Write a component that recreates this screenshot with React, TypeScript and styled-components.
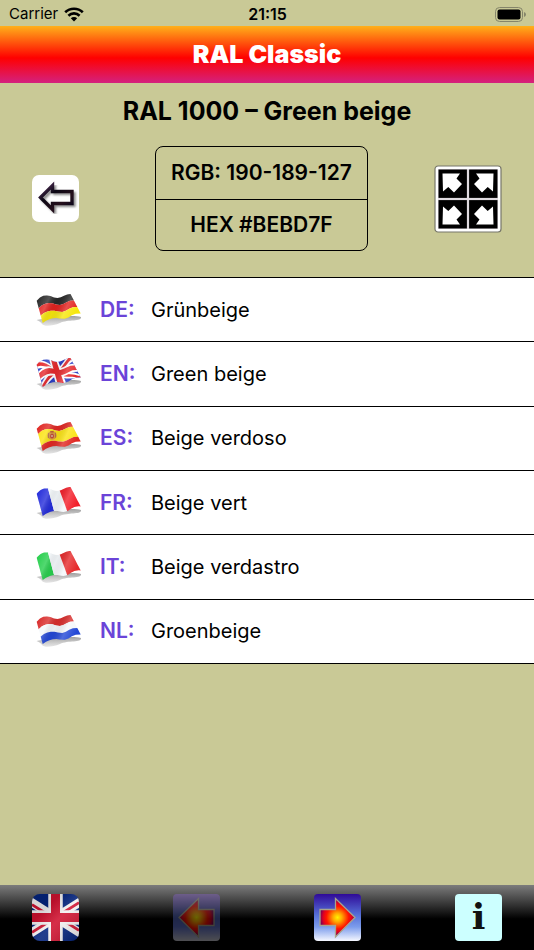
import React from "react";
import styled, { createGlobalStyle } from "styled-components";

const GlobalStyle = createGlobalStyle`
  *, *::before, *::after { box-sizing: border-box; }
  body {
    margin: 0;
    background: #c9c996;
    color: #000;
    font-family: Inter, "Liberation Sans", sans-serif;
  }
  h1, h2, p { margin: 0; }
`;

const Page = styled.div`
  min-height: 100vh;
  display: flex;
  flex-direction: column;
`;

const StatusBar = styled.div`
  display: grid;
  grid-template-columns: 1fr auto 1fr;
  align-items: center;
  height: 26px;
  padding: 2px 8px 0 9px;
  font-size: 15px;
  line-height: 24px;
`;

const Carrier = styled.span`
  display: flex;
  align-items: center;
  gap: 6px;
`;

const Clock = styled.time`
  font-size: 16px;
  font-weight: 600;
`;

const Battery = styled.svg`
  justify-self: end;
`;

const Header = styled.header`
  padding: 12px 16px;
  background: linear-gradient(#ffb01a, #ff0000 56%, #d4217f);
  color: #fff;
  text-align: center;
`;

const Title = styled.h1`
  font-size: 25px;
  line-height: 33px;
  font-weight: 900;
`;

const ColorName = styled.h2`
  padding: 12px 16px;
  font-size: 25px;
  line-height: 32px;
  font-weight: 700;
  text-align: center;
`;

const Summary = styled.section`
  display: flex;
  align-items: center;
  justify-content: space-between;
  padding: 7px 32px 26px;
`;

const IconButton = styled.button<{ $faded?: boolean; $trailing?: number }>`
  display: block;
  padding: 0;
  margin-right: ${(p) => p.$trailing ?? 0}px;
  border: 0;
  background: none;
  cursor: pointer;
  opacity: ${(p) => (p.$faded ? 0.4 : 1)};

  svg { display: block; }
`;

const Values = styled.div`
  border: 1px solid #000;
  border-radius: 8px;
  font-size: 21px;
  line-height: 28px;
  font-weight: 600;
  text-align: center;
`;

const Value = styled.p`
  padding: 12px 15px;

  & + & { padding: 11px 15px; border-top: 1px solid #000; }
`;

const Names = styled.table`
  width: 100%;
  height: 387px;
  border-collapse: collapse;
  background: #fff;
  font-size: 20px;
  line-height: 28px;
  text-align: left;
`;

const NameRow = styled.tr`
  border-top: 1px solid #000;
  border-bottom: 1px solid #000;
`;

const FlagCell = styled.td`
  width: 100px;
  padding: 0 0 0 36px;

  svg { display: block; }
`;

const Code = styled.th`
  width: 51px;
  padding: 0;
  color: #6b44d8;
  font-size: 21px;
  font-weight: 600;
`;

const Name = styled.td`
  padding: 0;
`;

const Toolbar = styled.nav`
  display: flex;
  justify-content: space-between;
  margin-top: auto;
  padding: 9px 32px;
  background: linear-gradient(#7c7c7c, #000 52%);
`;

/* ---- Waving flags: flat shapes mapped on a curved sheet ---- */

type Pt = [number, number];

const cubic = (a: Pt, b: Pt, c: Pt, d: Pt, t: number): Pt => {
  const s = 1 - t;
  const at = (i: 0 | 1) =>
    s * s * s * a[i] + 3 * s * s * t * b[i] + 3 * s * t * t * c[i] + t * t * t * d[i];
  return [at(0), at(1)];
};

const topEdge = (u: number): Pt =>
  u < 0.5
    ? cubic([0.7, 8.7], [6, 2], [12, 2.5], [18, 5.5], u * 2)
    : cubic([18, 5.5], [24, 8], [29, 1.5], [34.5, 2], u * 2 - 1);

const bottomEdge = (u: number): Pt =>
  u < 0.5
    ? cubic([6.7, 31], [12, 27], [18, 25], [24, 26.5], u * 2)
    : cubic([24, 26.5], [33, 29], [35, 20], [44.7, 21.5], u * 2 - 1);

const onSheet = ([u, v]: Pt): Pt => {
  const a = topEdge(u);
  const b = bottomEdge(u);
  return [a[0] + (b[0] - a[0]) * v, a[1] + (b[1] - a[1]) * v];
};

const shape = (corners: Pt[]) => {
  const out: string[] = [];
  corners.forEach((p, i) => {
    const q = corners[(i + 1) % corners.length];
    for (let k = 0; k < 10; k++) {
      const t = k / 10;
      const [x, y] = onSheet([p[0] + (q[0] - p[0]) * t, p[1] + (q[1] - p[1]) * t]);
      out.push(`${x.toFixed(2)},${y.toFixed(2)}`);
    }
  });
  return out.join(" ");
};

const box = (u0: number, u1: number, v0: number, v1: number) =>
  shape([[u0, v0], [u1, v0], [u1, v1], [u0, v1]]);

type Patch = { points: string; fill: string };

const stripes = (vertical: boolean, parts: [number, string][]): Patch[] => {
  let from = 0;
  return parts.map(([size, fill]) => {
    const to = Math.min(1, from + size);
    const points = vertical ? box(from, to, 0, 1) : box(0, 1, from, to);
    from = to;
    return { points, fill };
  });
};

const third = 1 / 3;

const flags: Record<string, Patch[]> = {
  DE: stripes(false, [[third, "#292929"], [third, "#e3221f"], [1, "#f7e70c"]]),
  EN: [
    { points: box(0, 1, 0, 1), fill: "#2b3fc4" },
    { points: shape([[0, 0], [0.15, 0], [1, 0.82], [1, 1], [0.85, 1], [0, 0.18]]), fill: "#fff" },
    { points: shape([[1, 0], [0.85, 0], [0, 0.82], [0, 1], [0.15, 1], [1, 0.18]]), fill: "#fff" },
    { points: shape([[0, 0], [0.07, 0], [1, 0.94], [1, 1], [0.93, 1], [0, 0.08]]), fill: "#e5282c" },
    { points: shape([[1, 0], [0.93, 0], [0, 0.92], [0, 1], [0.07, 1], [1, 0.08]]), fill: "#e5282c" },
    { points: box(0.37, 0.63, 0, 1), fill: "#fff" },
    { points: box(0, 1, 0.3, 0.7), fill: "#fff" },
    { points: box(0.42, 0.58, 0, 1), fill: "#e5282c" },
    { points: box(0, 1, 0.38, 0.62), fill: "#e5282c" },
  ],
  ES: stripes(false, [[0.24, "#e02722"], [0.52, "#fbe312"], [1, "#e02722"]]),
  FR: stripes(true, [[third, "#252ddb"], [third, "#f4f8fb"], [1, "#f3202b"]]),
  IT: stripes(true, [[third, "#27cf4d"], [third, "#f4f8fb"], [1, "#e62a2b"]]),
  NL: stripes(false, [[third, "#d92d2c"], [third, "#f4f8fb"], [1, "#2348d6"]]),
};

const WavingFlag = ({ code }: { code: string }) => (
  <svg width="46" height="36" viewBox="0 0 46 36" aria-hidden="true">
    <defs>
      <linearGradient id={`sheen-${code}`} x1="0" y1="0" x2="1" y2="0.3">
        <stop offset="0.05" stopColor="#fff" stopOpacity="0" />
        <stop offset="0.3" stopColor="#fff" stopOpacity="0.2" />
        <stop offset="0.5" stopColor="#000" stopOpacity="0.04" />
        <stop offset="0.75" stopColor="#fff" stopOpacity="0.2" />
        <stop offset="1" stopColor="#fff" stopOpacity="0" />
      </linearGradient>
      <linearGradient id={`shade-${code}`} x1="0" y1="0" x2="0" y2="1">
        <stop offset="0" stopColor="#777" stopOpacity="0.7" />
        <stop offset="1" stopColor="#aaa" stopOpacity="0.3" />
      </linearGradient>
    </defs>
    <path
      d="M0.5 28 C8 27 34 22 45 25 C46 30 32 27 24 31 C17 34 8 35 6 32 C5 30 3 29 0.5 28Z"
      fill={`url(#shade-${code})`}
    />
    {flags[code].map((p, i) => (
      <polygon key={i} points={p.points} fill={p.fill} />
    ))}
    {code === "ES" && (
      <g>
        <ellipse cx="16" cy="15.5" rx="4.6" ry="4.3" fill="#dca040" />
        <path d="M12.4 13v5M19.6 12.6v5" stroke="#b96a4a" strokeWidth="1" />
        <ellipse cx="16" cy="16" rx="2" ry="2.5" fill="#c4483a" />
        <circle cx="16" cy="16" r="1" fill="#d9b7a0" />
        <path d="M14.2 11.8h3.4" stroke="#b9502e" strokeWidth="1.4" />
      </g>
    )}
    <polygon points={box(0, 1, 0, 1)} fill={`url(#sheen-${code})`} />
  </svg>
);

/* ---- Other icons ---- */

const WifiIcon = () => (
  <svg width="20" height="15" viewBox="0 0 20 15" aria-hidden="true">
    <g fill="none" stroke="#000" strokeWidth="2.6">
      <path d="M1.2 5.3 A12.6 12.6 0 0 1 18.8 5.3" />
      <path d="M4.4 8.7 A8 8 0 0 1 15.6 8.7" />
    </g>
    <path d="M10 14.6 L6.8 11.3 A4.6 4.6 0 0 1 13.2 11.3Z" />
  </svg>
);

const BatteryIcon = () => (
  <Battery width="31" height="15" viewBox="0 0 31 15" role="img" aria-label="Battery full">
    <rect x="0.5" y="0.5" width="27" height="14" rx="4" fill="none" stroke="#85856a" />
    <rect x="2.5" y="2.5" width="23" height="10" rx="2" />
    <path d="M29 5 Q31 5.8 31 7.5 T29 10Z" fill="#85856a" />
  </Battery>
);

const OutlineArrowIcon = () => (
  <svg width="47" height="47" viewBox="0 0 47 47" aria-hidden="true">
    <defs>
      <linearGradient id="ink" x1="0" y1="0" x2="1" y2="1">
        <stop offset="0" stopColor="#5b3560" />
        <stop offset="0.35" stopColor="#0b0714" />
        <stop offset="0.7" stopColor="#26101c" />
        <stop offset="1" stopColor="#05051c" />
      </linearGradient>
      <filter id="soft"><feGaussianBlur stdDeviation="0.8" /></filter>
    </defs>
    <rect width="47" height="47" rx="7" fill="#fff" />
    <path
      d="M8.5 22.5 L20.5 10.5 V16.5 H40 V28.5 H20.5 V34.5Z"
      transform="translate(2 2)" fill="none" stroke="#888" strokeWidth="3.2" filter="url(#soft)"
    />
    <path
      d="M8.5 22.5 L20.5 10.5 V16.5 H40 V28.5 H20.5 V34.5Z"
      fill="none" stroke="url(#ink)" strokeWidth="3.4"
    />
  </svg>
);

const ExpandIcon = () => {
  const arrow = "M4 4 H21.5 L18 9 L23.5 14.5 L15.5 23 L9.8 17.5 L4.5 22Z";
  return (
    <svg width="68" height="68" viewBox="0 0 68 68" aria-hidden="true">
      <rect x="1" y="1" width="66" height="66" rx="3" fill="#fff" stroke="#77776a" strokeWidth="1.2" />
      <rect x="4" y="4" width="60" height="60" fill="#e0dbe0" />
      {[[4.5, 4.5, 1, 1], [63.5, 4.5, -1, 1], [4.5, 63.5, 1, -1], [63.5, 63.5, -1, -1]].map(([x, y, sx, sy]) => (
        <g key={`${x}-${y}`} transform={`translate(${x} ${y}) scale(${sx} ${sy})`}>
          <rect width="28.4" height="28.4" />
          <path d={arrow} fill="#fff" />
        </g>
      ))}
    </svg>
  );
};

const UnionJackIcon = () => (
  <svg width="47" height="47" viewBox="0 0 47 47" aria-hidden="true">
    <defs>
      <clipPath id="tile"><rect width="47" height="47" rx="8" /></clipPath>
      <linearGradient id="gloss" x1="0" y1="0" x2="1" y2="1">
        <stop offset="0.3" stopColor="#000" stopOpacity="0.12" />
        <stop offset="0.55" stopColor="#fff" stopOpacity="0.12" />
        <stop offset="1" stopColor="#000" stopOpacity="0.18" />
      </linearGradient>
    </defs>
    <g clipPath="url(#tile)">
      <rect width="47" height="47" fill="#04247e" />
      <path d="M-8 3.5 L55 43.5 M55 3.5 L-8 43.5" stroke="#f4f2f2" strokeWidth="8.6" />
      <path
        d="M0 10.6 L18 22 M47 36.4 L29 25 M47 8.6 L27 21.3 M0 38.4 L20 25.7"
        stroke="#cf1230" strokeWidth="2.8"
      />
      <path d="M23.5 0V47M0 23.5H47" stroke="#f4f2f2" strokeWidth="14.5" />
      <path d="M23.5 0V47M0 23.5H47" stroke="#d01230" strokeWidth="9" />
      <rect width="47" height="47" fill="url(#gloss)" />
    </g>
  </svg>
);

const GlowArrowIcon = ({ back }: { back?: boolean }) => {
  const id = back ? "back" : "next";
  return (
    <svg width="47" height="47" viewBox="0 0 47 47" aria-hidden="true">
      <defs>
        <linearGradient id={`sky-${id}`} x1="0" y1="0" x2="0" y2="1">
          <stop offset="0" stopColor={back ? "#8a62d0" : "#2f0a98"} />
          <stop offset="0.45" stopColor={back ? "#4a5cb0" : "#5670d8"} />
          <stop offset="0.7" stopColor={back ? "#5a6cc4" : "#7c9cec"} />
          <stop offset="1" stopColor={back ? "#c4c4cc" : "#f6f8ff"} />
        </linearGradient>
        <radialGradient id={`fire-${id}`} gradientUnits="userSpaceOnUse" cx="23.5" cy="23.5" r="18">
          <stop offset="0" stopColor="#fff200" />
          <stop offset="0.25" stopColor="#ffa800" />
          <stop offset="0.62" stopColor="#ff1400" />
          <stop offset="0.8" stopColor="#e00020" />
          <stop offset="1" stopColor="#6a0060" />
        </radialGradient>
      </defs>
      <rect width="47" height="47" rx="4" fill={`url(#sky-${id})`} />
      <path
        d="M6 15.5 H21.5 V4.5 L41 23.5 L21.5 43 V31.5 H6Z"
        transform={back ? "translate(47 0) scale(-1 1)" : undefined}
        fill={`url(#fire-${id})`} stroke="#a9a58c" strokeWidth="1.3"
      />
    </svg>
  );
};

const InfoTile = styled.span`
  display: block;
  width: 47px;
  height: 47px;
  border-radius: 4px;
  background: #ccffff;
  color: #111;
  font: 700 36px/45px "DejaVu Serif", serif;
  text-align: center;
`;

const names: [string, string][] = [
  ["DE", "Grünbeige"],
  ["EN", "Green beige"],
  ["ES", "Beige verdoso"],
  ["FR", "Beige vert"],
  ["IT", "Beige verdastro"],
  ["NL", "Groenbeige"],
];

export default function App() {
  return (
    <Page>
      <GlobalStyle />
      <StatusBar>
        <Carrier>Carrier <WifiIcon /></Carrier>
        <Clock>21:15</Clock>
        <BatteryIcon />
      </StatusBar>
      <Header>
        <Title>RAL Classic</Title>
      </Header>
      <main>
        <ColorName>RAL 1000 – Green beige</ColorName>
        <Summary>
          <IconButton type="button" aria-label="Back" $trailing={10}><OutlineArrowIcon /></IconButton>
          <Values>
            <Value>RGB: 190-189-127</Value>
            <Value>HEX #BEBD7F</Value>
          </Values>
          <IconButton type="button" aria-label="Full screen"><ExpandIcon /></IconButton>
        </Summary>
        <Names>
          <tbody>
            {names.map(([code, name]) => (
              <NameRow key={code}>
                <FlagCell><WavingFlag code={code} /></FlagCell>
                <Code scope="row">{code}:</Code>
                <Name>{name}</Name>
              </NameRow>
            ))}
          </tbody>
        </Names>
      </main>
      <Toolbar>
        <IconButton type="button" aria-label="Language"><UnionJackIcon /></IconButton>
        <IconButton type="button" aria-label="Previous colour" disabled $faded><GlowArrowIcon back /></IconButton>
        <IconButton type="button" aria-label="Next colour"><GlowArrowIcon /></IconButton>
        <IconButton type="button" aria-label="Information"><InfoTile>i</InfoTile></IconButton>
      </Toolbar>
    </Page>
  );
}
